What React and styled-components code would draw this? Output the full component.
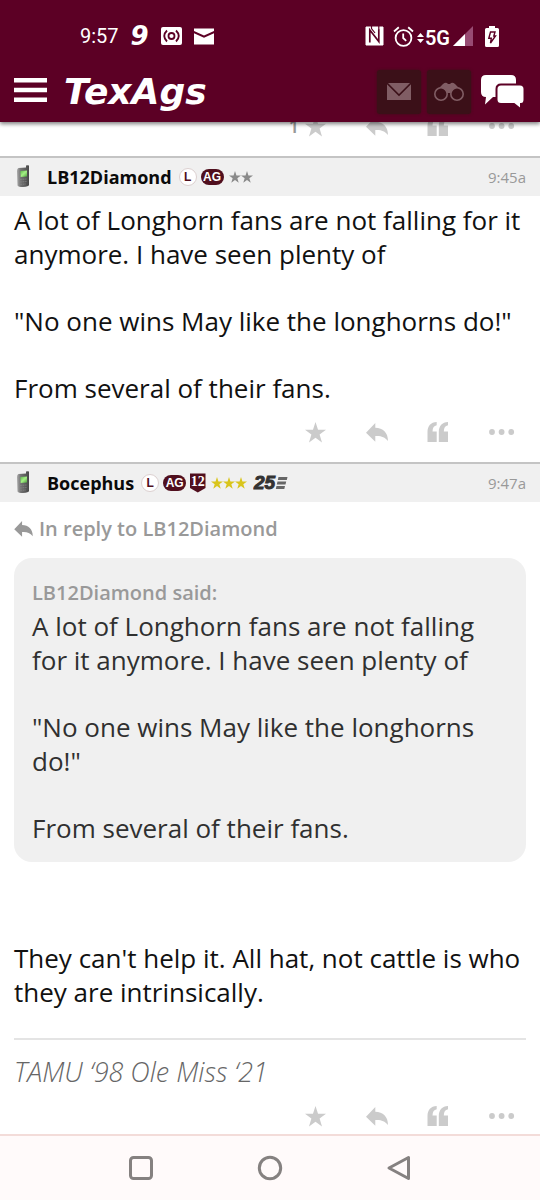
import React from "react";
import styled, { createGlobalStyle } from "styled-components";

const GlobalStyle = createGlobalStyle`
  *, *::before, *::after { box-sizing: border-box; }
  body { margin: 0; background: #fff; font-family: "Open Sans", "Noto Sans", sans-serif; color: #111; }
  button { border: 0; padding: 0; margin: 0; background: none; font: inherit; color: inherit; cursor: pointer; }
  a { color: inherit; text-decoration: none; }
  p, h1, h2, blockquote { margin: 0; }
  svg { display: block; flex: none; }
`;

const Page = styled.div`
  display: flex;
  flex-direction: column;
  min-height: 100vh;
`;

const TopArea = styled.header`
  position: sticky;
  top: 0;
  z-index: 2;
  flex: none;
  background: #5c0025;
  color: #fff;
  box-shadow: 0 2px 4px rgba(0, 0, 0, 0.5);
`;

const StatusBar = styled.div`
  display: flex;
  align-items: center;
  justify-content: space-between;
  height: 70px;
  padding: 2px 41px 0 80px;
  font-family: Roboto, sans-serif;
  font-size: 20px;
`;

const StatusGroup = styled.div`
  display: flex;
  align-items: center;
  gap: ${(p) => p.$gap}px;
`;

const ScoreMark = styled.span`
  font: italic 700 26px/26px "DejaVu Sans", sans-serif;
`;

const Network = styled.span`
  display: flex;
  align-items: center;
  gap: 1px;
  font: 600 20px/22px "Roboto", sans-serif;
  padding-top: 4px;
`;

const NavBar = styled.nav`
  display: flex;
  align-items: flex-start;
  height: 52px;
  padding: 0 16px 0 14px;
`;

const MenuButton = styled.button`
  display: flex;
  align-items: center;
  height: 40px;
  margin-right: 17px;
`;

const Logo = styled.a`
  font: italic 700 36px/44px "DejaVu Sans", sans-serif;
`;

const NavActions = styled.div`
  display: flex;
  gap: 6px;
  margin-left: auto;
`;

const SquareButton = styled.button`
  display: grid;
  place-items: center;
  width: 44px;
  height: 44px;
  margin-left: ${(p) => (p.$plain ? 3 : 0)}px;
  border-radius: 3px;
  background: ${(p) => (p.$plain ? "none" : "#3b1018")};
  box-shadow: ${(p) => (p.$plain ? "none" : "0 0 3px #3b1018")};
`;

const Thread = styled.main`
  flex: 1;
  margin-top: -22px;
`;

const ActionRow = styled.div`
  display: flex;
  justify-content: flex-end;
  height: 56px;
  padding: 0 4px 4px 0;
  color: #cbcbcb;
`;

const ActionButton = styled.button`
  display: flex;
  align-items: center;
  justify-content: center;
  width: ${(p) => (p.$wide ? 68 : 61)}px;
`;

const StarButton = styled(ActionButton)`
  justify-content: flex-end;
  gap: 6px;
  padding-right: 20px;
`;

const StarCount = styled.span`
  font-family: "Noto Sans", sans-serif;
  font-size: 18px;
  line-height: 24px;
  font-weight: 600;
  color: #999;
`;

const PostHeader = styled.header`
  display: flex;
  align-items: center;
  height: 40px;
  padding: 0 14px;
  border-top: 2px solid #c4c4c4;
  background: #f0f0f0;
`;

const UserName = styled.a`
  margin: 0 7px 0 14px;
  font-size: 18px;
  line-height: 24px;
  font-weight: 700;
  color: #0a0a0a;
`;

const Badges = styled.div`
  display: flex;
  align-items: center;
  gap: 4px;
`;

const LetterBadge = styled.span`
  display: grid;
  place-items: center;
  width: 18px;
  height: 18px;
  border: 1px solid #dcd0d0;
  border-radius: 50%;
  background: #fff;
  color: #500f1e;
  font: 700 12px/12px "Liberation Sans", sans-serif;
`;

const AgBadge = styled.span`
  display: grid;
  place-items: center;
  width: 23px;
  height: 16px;
  border-radius: 8px;
  background: #500f1e;
  color: #fff;
  font: 700 12px/12px "Liberation Sans", sans-serif;
`;

const Stars = styled.span`
  display: flex;
  margin: 0 2px 0 1px;
  color: ${(p) => p.$color};
`;

const TimeStamp = styled.time`
  margin-left: auto;
  font-size: 15px;
  line-height: 24px;
  color: #999;
`;

const PostBody = styled.div`
  display: flex;
  flex-direction: column;
  gap: 33px;
  padding: 7px 14px 1px;
  font-size: 26px;
  line-height: 34px;
`;

const ReplyLink = styled.a`
  display: flex;
  align-items: center;
  gap: 6px;
  padding: 15px 14px 17px;
  font-size: 20px;
  line-height: 24px;
  font-weight: 600;
  color: #999;
`;

const Quote = styled.blockquote`
  margin: 0 14px;
  padding: 18px 18px 17px;
  border-radius: 18px;
  background: #f0f0f0;
  color: #303030;
  font-size: 26px;
  line-height: 34px;
`;

const QuoteAuthor = styled.cite`
  display: block;
  font-style: normal;
  font-weight: 600;
  font-size: 20px;
  line-height: 33px;
  color: #999;
`;

const QuoteText = styled.div`
  display: flex;
  flex-direction: column;
  gap: 33px;
`;

const ReplyBody = styled(PostBody)`
  padding: 79px 14px 29px;
`;

const Signature = styled.footer`
  margin: 0 14px;
  padding: 16px 0 2px;
  border-top: 2px solid #e4e4e4;
  color: #666;
  font-size: 27px;
  line-height: 32px;
  font-style: italic;
  font-weight: 300;
`;

const SystemNav = styled.nav`
  position: sticky;
  bottom: 0;
  z-index: 2;
  display: flex;
  justify-content: center;
  align-items: center;
  gap: 101px;
  height: 66px;
  margin-top: -12px;
  border-top: 2px solid #f3dcd9;
  background: #fffafa;
`;

const STAR = "M10 0 12.4 7.4H20L13.9 12 16.2 19.5 10 14.9 3.8 19.5 6.1 12 0 7.4H7.6Z";

const StarIcon = ({ size = 21 }) => (
  <svg width={size} height={size} viewBox="0 0 20 20" fill="currentColor"><path d={STAR} /></svg>
);

const ReplyIcon = ({ width = 22, height = 19 }) => (
  <svg width={width} height={height} viewBox="0 0 22 19" fill="currentColor">
    <path d="M0 9.8 9.3 0V4.8C17 5 22 9.6 22 18C18.5 13.8 15 12.6 9.3 13V18.8Z" />
  </svg>
);

const QuoteIcon = () => (
  <svg width="22" height="20" viewBox="0 0 22 20" fill="currentColor">
    <path d="M9.7 0V3.3C7 3.8 5.6 5.6 5.5 9.5H9.7V20H.5V10C.5 4 3.8.3 9.7 0Z" />
    <path d="M21 0V3.3C18.3 3.8 16.9 5.6 16.8 9.5H21V20H11.8V10C11.8 4 15.1.3 21 0Z" />
  </svg>
);

const DotsIcon = () => (
  <svg width="26" height="6" viewBox="0 0 26 6" fill="currentColor">
    <circle cx="3" cy="3" r="2.9" /><circle cx="12.6" cy="3" r="2.9" /><circle cx="22.2" cy="3" r="2.9" />
  </svg>
);

const PhoneIcon = () => (
  <svg width="19" height="24" viewBox="0 0 19 24">
    <defs>
      <linearGradient id="shell" x1="0" x2="1">
        <stop offset="0" stopColor="#aaa" /><stop offset=".3" stopColor="#747474" /><stop offset="1" stopColor="#484848" />
      </linearGradient>
      <linearGradient id="screen" x1="0" x2="1" y1="0" y2="1">
        <stop offset="0" stopColor="#5bb54a" /><stop offset=".5" stopColor="#a6ef86" /><stop offset="1" stopColor="#4ba33c" />
      </linearGradient>
    </defs>
    <path d="M4.5 3 12 2.4V.6Q13.5-.2 15 .6V20Q14.8 21.6 9 22Q4.5 22 3.500 20.5L3 6Q3 3.6 4.5 3Z" fill="url(#shell)" />
    <path d="M6.3 6 13 5.6V11.5L6.7 11.9Z" fill="url(#screen)" />
    <path d="M6 14.5 12.5 14M6 17 12.5 16.5M6.2 19.4 12 19" stroke="#858585" strokeWidth=".8" strokeDasharray="1.8 .8" />
  </svg>
);

const ShieldIcon = () => (
  <svg width="16" height="20" viewBox="0 0 16 20" role="img" aria-label="12">
    <path d="M0 .5H15.5V15L7.8 19.5 0 15Z" fill="#500f1e" />
    <text x="7.8" y="13" textAnchor="middle" fill="#fff" fontFamily="Liberation Serif, serif" fontWeight="700" fontSize="14">12</text>
  </svg>
);

const SpeedIcon = () => (
  <svg width="35" height="26" viewBox="0 -5 35 26" role="img" aria-label="25">
    <text x="1" y="14" fill="#333" stroke="#333" strokeWidth="1" fontFamily="Liberation Sans, sans-serif" fontStyle="italic" fontWeight="700" fontSize="19">25</text>
    <path d="M25.5 2H34.500L33.800 5H24.800ZM24.500 6.500H33.200L32.500 9.500H23.800ZM23.500 11H32L31.300 14H22.800Z" fill="#666" />
  </svg>
);

const CameraIcon = () => (
  <svg width="21" height="18" viewBox="0 0 21 18">
    <rect width="21" height="18" rx="2" fill="#fff" />
    <g fill="none" stroke="#5c0025" strokeWidth="1.8">
      <circle cx="10.5" cy="9" r="3" /><path d="M6 3.5Q.5 9 6 14.5M15 3.5Q20.500 9 15 14.5" />
    </g>
  </svg>
);

const StatusMailIcon = () => (
  <svg width="20" height="17" viewBox="0 0 20 17" fill="#fff">
    <path d="M0 .5H20V3L10 7.5 0 3ZM0 5.3 10 9.8 20 5.3V16.500H0Z" />
  </svg>
);

const NfcIcon = () => (
  <svg width="19" height="20" viewBox="0 0 19 20">
    <path d="M1 1H18V19H1Z" fill="#fff" stroke="#fff" strokeWidth="1" />
    <path d="M4.800 16.500V4L13.800 15.500V3.500" fill="none" stroke="#5c0025" strokeWidth="1.700" />
    <path d="M6.500 0V2.500L10 7M13.800 0V4" fill="none" stroke="#5c0025" strokeWidth="1.200" />
  </svg>
);

const AlarmIcon = () => (
  <svg width="21" height="21" viewBox="0 0 21 21" fill="none" stroke="#fff" strokeWidth="1.8">
    <circle cx="10.500" cy="12" r="7.900" /><path d="M1 5.500 5.800 1.300M20 5.500 15.200 1.300M10.200 7.500V12L13.200 14.800" />
  </svg>
);

const DataArrows = () => (
  <svg width="7" height="10" viewBox="0 0 7 10" fill="#fff"><path d="M0 4 3.500 0 7 4ZM0 6 3.500 10 7 6Z" /></svg>
);

const SignalIcon = () => (
  <svg width="20" height="20" viewBox="0 0 20 20">
    <path d="M0 20 20 0V20Z" fill="#984b73" /><path d="M0 20 12 8V20Z" fill="#fff" />
  </svg>
);

const BatteryIcon = () => (
  <svg width="14" height="21" viewBox="0 0 14 21">
    <path d="M4 0H10V2H12.500Q14 2 14 3.500V19.500Q14 21 12.500 21H1.500Q0 21 0 19.500V3.500Q0 2 1.500 2H4Z" fill="#fff" />
    <path d="M5.500 6H10L8.800 10H10.500L5.500 17 6.300 12.200H3.800Z" fill="none" stroke="#5c0025" strokeWidth="1.400" />
  </svg>
);

const MenuIcon = () => (
  <svg width="33" height="26" viewBox="0 0 33 26" fill="#fff">
    <path d="M0 1H33V5.500H0ZM0 10.700H33V15.200H0ZM0 20.500H33V25H0Z" />
  </svg>
);

const MailIcon = () => (
  <svg width="24" height="18" viewBox="0 0 24 18" fill="#805d64">
    <path d="M1 0H23L12 11ZM0 1.200 12 13.200 24 1.200V17H0Z" />
  </svg>
);

const BinocularsIcon = () => (
  <svg width="30" height="20" viewBox="0 0 30 20" fill="none" stroke="#805d64">
    <path d="M3 8 9 2Q12-.5 14 2H16Q18-.5 21 2L27 8 20 7 17 11H13L10 7Z" fill="#805d64" stroke="none" />
    <circle cx="7" cy="12" r="6.200" fill="#3b1018" strokeWidth="1.600" /><circle cx="23" cy="12" r="6.200" fill="#3b1018" strokeWidth="1.600" />
  </svg>
);

const ChatIcon = () => (
  <svg width="43" height="36" viewBox="0 0 43 36">
    <path d="M5 1H30Q35 1 35 6V18Q35 23 31 23H12L4 30.500 5 23Q0 23 0 18V6Q0 1 5 1Z" fill="#fff" />
    <path d="M20 10.500H39Q43.500 10.500 43.500 15V25.500Q43.500 30 40 30V35.500L33 30H20Q15.500 30 15.500 25.500V15Q15.500 10.500 20 10.500Z" fill="#fff" stroke="#5c0025" strokeWidth="2" />
  </svg>
);

const navIcon = { width: 28, height: 28, viewBox: "0 0 28 28", fill: "none", stroke: "#858180", strokeWidth: 3, strokeLinejoin: "round" };

function Actions({ count }) {
  return (
    <ActionRow>
      <StarButton aria-label="Star">{count && <StarCount>{count}</StarCount>}<StarIcon /></StarButton>
      <ActionButton aria-label="Reply"><ReplyIcon /></ActionButton>
      <ActionButton aria-label="Quote"><QuoteIcon /></ActionButton>
      <ActionButton $wide aria-label="More"><DotsIcon /></ActionButton>
    </ActionRow>
  );
}

function PosterBar({ name, time, stars, starColor, shield, speed }) {
  return (
    <PostHeader>
      <PhoneIcon />
      <UserName href="#user">{name}</UserName>
      <Badges>
        <LetterBadge>L</LetterBadge>
        <AgBadge>AG</AgBadge>
        {shield && <ShieldIcon />}
        <Stars $color={starColor}>
          {Array.from({ length: stars }, (_, i) => <StarIcon key={i} size={12} />)}
        </Stars>
        {speed && <SpeedIcon />}
      </Badges>
      <TimeStamp>{time}</TimeStamp>
    </PostHeader>
  );
}

export default function App() {
  return (
    <Page>
      <GlobalStyle />
      <TopArea>
        <StatusBar>
          <StatusGroup $gap={12}>
            <span>9:57</span>
            <ScoreMark>9</ScoreMark>
            <CameraIcon />
            <StatusMailIcon />
          </StatusGroup>
          <StatusGroup $gap={12}>
            <StatusGroup $gap={9}>
              <NfcIcon />
              <StatusGroup $gap={3}>
                <AlarmIcon />
                <Network><DataArrows />5G</Network>
                <SignalIcon />
              </StatusGroup>
            </StatusGroup>
            <BatteryIcon />
          </StatusGroup>
        </StatusBar>
        <NavBar>
          <MenuButton aria-label="Menu"><MenuIcon /></MenuButton>
          <Logo href="#home">TexAgs</Logo>
          <NavActions>
            <SquareButton aria-label="Messages"><MailIcon /></SquareButton>
            <SquareButton aria-label="Watched"><BinocularsIcon /></SquareButton>
            <SquareButton $plain aria-label="Forums"><ChatIcon /></SquareButton>
          </NavActions>
        </NavBar>
      </TopArea>

      <Thread>
        <Actions count="1" />
        <article>
          <PosterBar name="LB12Diamond" time="9:45a" stars={2} starColor="#8a8a8a" />
          <PostBody>
            <p>A lot of Longhorn fans are not falling for it anymore. I have seen plenty of</p>
            <p>"No one wins May like the longhorns do!"</p>
            <p>From several of their fans.</p>
          </PostBody>
          <Actions />
        </article>
        <article>
          <PosterBar name="Bocephus" time="9:47a" stars={3} starColor="#d9c51c" shield speed />
          <ReplyLink href="#parent"><ReplyIcon width={19} height={16} />In reply to LB12Diamond</ReplyLink>
          <Quote>
            <QuoteAuthor>LB12Diamond said:</QuoteAuthor>
            <QuoteText>
              <p>A lot of Longhorn fans are not falling for it anymore. I have seen plenty of</p>
              <p>"No one wins May like the longhorns do!"</p>
              <p>From several of their fans.</p>
            </QuoteText>
          </Quote>
          <ReplyBody>
            <p>They can't help it. All hat, not cattle is who they are intrinsically.</p>
          </ReplyBody>
          <Signature>TAMU ‘98 Ole Miss ‘21</Signature>
          <Actions />
        </article>
      </Thread>

      <SystemNav aria-label="System">
        <button aria-label="Recent apps"><svg {...navIcon}><rect x="3.500" y="3.500" width="21" height="21" rx="3" /></svg></button>
        <button aria-label="Home"><svg {...navIcon}><circle cx="14" cy="14" r="10.700" /></svg></button>
        <button aria-label="Back"><svg {...navIcon}><path d="M4 14 23.500 3.500V24.500Z" /></svg></button>
      </SystemNav>
    </Page>
  );
}
